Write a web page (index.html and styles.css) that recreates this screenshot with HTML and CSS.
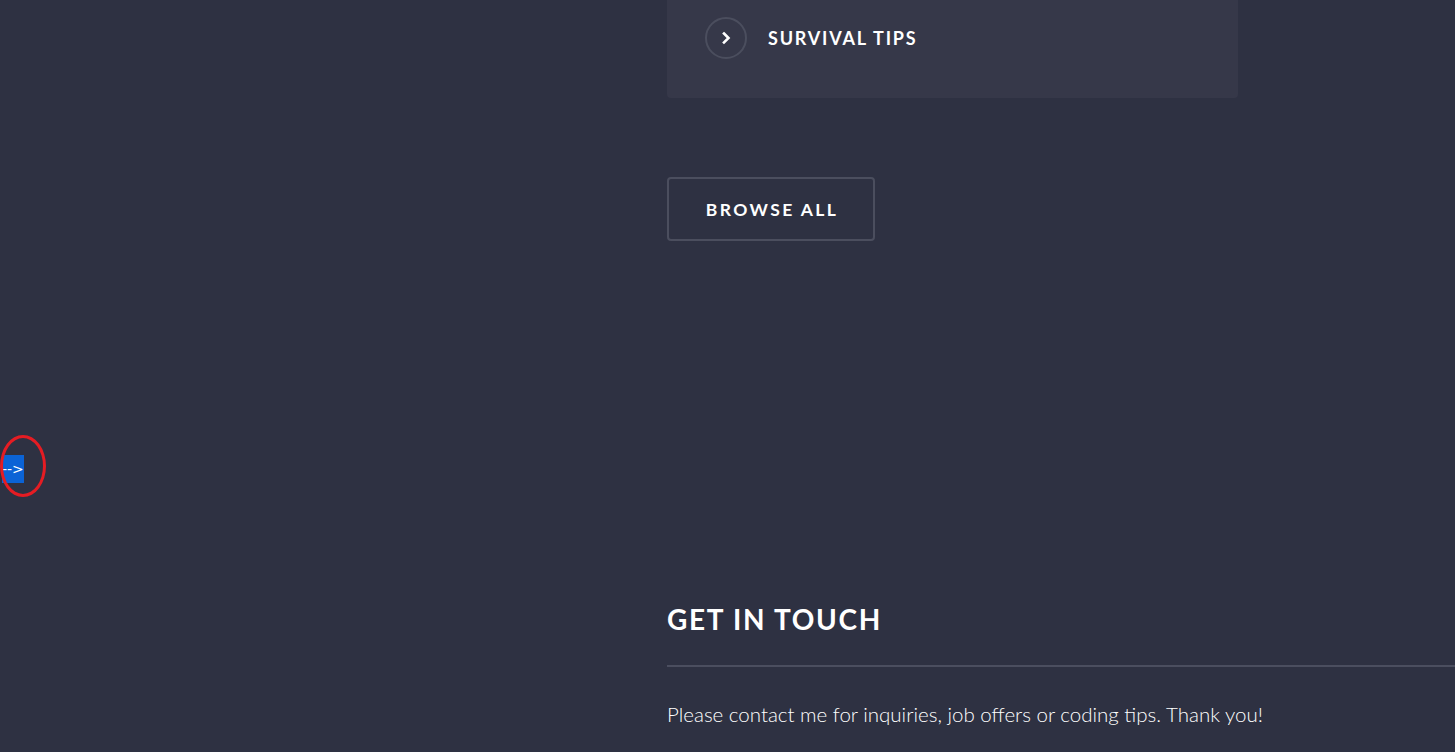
FILE: index.html
```html
<!DOCTYPE html>
<html>
<head>
<meta charset="utf-8">
<link rel="stylesheet" href="styles.css">
</head>
<body>
<div class="page">
  <main class="content">
    <section class="topics">
      <div class="topic-card">
        <div class="topic">
          <span class="topic-icon">
            <svg width="14" height="14" viewBox="0 0 14 14"><path d="M5 2.5 L9.5 7 L5 11.5" fill="none" stroke="#fff" stroke-width="2.6" stroke-linecap="square" stroke-linejoin="miter"/></svg>
          </span>
          <span class="topic-label">SURVIVAL TIPS</span>
        </div>
      </div>
      <a class="browse-btn" href="#">BROWSE ALL</a>
    </section>
    <section class="contact">
      <h2 class="contact-title">GET IN TOUCH</h2>
      <hr class="contact-rule">
      <p class="contact-text">Please contact me for inquiries, job offers or coding tips. Thank you!</p>
    </section>
  </main>
  <span class="stray">--&gt;</span>
  <span class="mark"></span>
</div>
</body>
</html>
```
FILE: styles.css
```css
html, body {
  margin: 0;
  padding: 0;
  background: #2e3142;
  height: 100%;
  overflow: hidden;
}
.page {
  position: relative;
  height: 752px;
  font-family: Lato, "Liberation Sans", sans-serif;
  color: #fff;
}
.content {
  padding-left: 667px;
}
.topics {
  display: flex;
  flex-direction: column;
  align-items: flex-start;
}
.topic-card {
  width: 571px;
  box-sizing: border-box;
  background: #363849;
  border-radius: 0 0 4px 4px;
  padding: 17px 38px 39px;
}
.topic {
  display: flex;
  align-items: center;
  gap: 21px;
}
.topic-icon {
  width: 42px;
  height: 42px;
  box-sizing: border-box;
  border: 2px solid #4b4e5e;
  border-radius: 50%;
  display: flex;
  align-items: center;
  justify-content: center;
}
.topic-icon svg { display: block; }
.topic-label {
  font-weight: 700;
  font-size: 18px;
  letter-spacing: 1.8px;
}
.browse-btn {
  margin-top: 79px;
  width: 208px;
  height: 64px;
  box-sizing: border-box;
  border: 2px solid #4b4e5e;
  border-radius: 4px;
  display: flex;
  align-items: center;
  justify-content: center;
  color: #fff;
  text-decoration: none;
  font-weight: 700;
  font-size: 17.5px;
  letter-spacing: 2.4px;
  padding-left: 2px;
}
.contact {
  margin-top: 361px;
}
.contact-title {
  margin: 0;
  font-size: 28px;
  line-height: 34px;
  font-weight: 700;
  letter-spacing: 1.7px;
}
.contact-rule {
  margin: 29px 0 0;
  border: 0;
  height: 2px;
  background: #4b4e5f;
}
.contact-text {
  margin: 33px 0 0;
  font-size: 20.5px;
  font-weight: 300;
  line-height: 28px;
}
.stray {
  position: absolute;
  left: 2px;
  top: 455px;
  width: 22px;
  height: 28px;
  background: #0b63d6;
  color: #fff;
  font-family: "DejaVu Sans", sans-serif;
  font-size: 14px;
  line-height: 28px;
  white-space: nowrap;
  overflow: hidden;
}
.mark {
  position: absolute;
  left: 0;
  top: 435px;
  width: 40px;
  height: 56px;
  border: 3px solid #e51c23;
  border-radius: 50%;
}
```
